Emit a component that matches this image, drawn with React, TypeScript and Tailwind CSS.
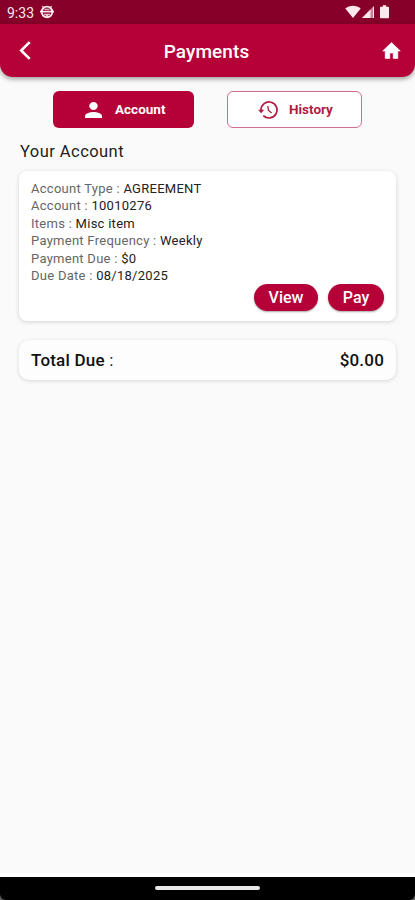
const details = [
  { label: 'Account Type', value: 'AGREEMENT' },
  { label: 'Account', value: '10010276' },
  { label: 'Items', value: 'Misc item' },
  { label: 'Payment Frequency', value: 'Weekly' },
  { label: 'Payment Due', value: '$0' },
  { label: 'Due Date', value: '08/18/2025' },
]

function StatusBar() {
  return (
    <div className="h-6 shrink-0 bg-[#870029] flex items-center justify-between pl-[7px] pr-[25px] text-[#fbe9ee]">
      <div className="flex items-center gap-[6px]">
        <span className="text-[14px] leading-6 pt-px">9:33</span>
        <svg className="w-[14px] h-[14px]" viewBox="0 0 14 14" fill="none" stroke="currentColor" strokeWidth="1.8">
          <circle cx="7" cy="7" r="5.3" />
          <path d="M0 6.6h14" strokeWidth="1.7" />
          <path d="M4 9.3h2.3v2.6M10 9.3H7.7v2.6M4.6 4.2h4.8" strokeWidth="1.1" />
          <path d="M3.4 2.4 2.4 1.2M10.6 2.4l1-1.2" strokeWidth="1.4" />
        </svg>
      </div>
      <svg className="w-[45px] h-[14px]" viewBox="0 0 45 14" fill="currentColor">
        <path d="M.3 3.6C4.7-.1 11.3-.1 15.7 3.6L8 13z" />
        <path d="M29 .8v12.2H17z" opacity=".55" />
        <path d="M25.5 4.4V13H17z" />
        <path d="M28 2h1v11h-1z" />
        <path d="M37.8.3h3.4v1.5h2c.5 0 .8.3.8.8v9.8c0 .5-.3.8-.8.8h-7.4c-.5 0-.8-.3-.8-.8V2.6c0-.5.3-.8.8-.8h2z" />
      </svg>
    </div>
  )
}

function Header() {
  return (
    <div className="h-[53px] shrink-0 bg-[#b50038] rounded-b-[13px] shadow-[0_2px_5px_rgba(0,0,0,0.38)] flex items-center justify-between pl-[19px] pr-[14px] text-white">
      <svg className="w-3 h-[19px]" viewBox="0 0 12 19" fill="none" stroke="currentColor" strokeWidth="2.6">
        <path d="M10.7 1.1 2.2 9.5l8.5 8.4" />
      </svg>
      <h1 className="text-[19px] font-medium leading-6 tracking-[0.1px] pt-[2px]">Payments</h1>
      <svg className="w-[19px] h-[17px]" viewBox="0 0 19 17" fill="currentColor" stroke="currentColor" strokeWidth="0.6" strokeLinejoin="round">
        <path d="M9.5.5 18.3 9h-2.5v7.5h-4.6V11H7.8v5.5H3.2V9H.7z" />
      </svg>
    </div>
  )
}

export default function App() {
  return (
    <div className="h-[900px] w-[415px] overflow-hidden bg-[#fafafa] font-['Roboto',sans-serif] flex flex-col">
      <StatusBar />
      <Header />

      <main className="flex-1 px-[19px] pt-[14px] border-b-4 border-white">
        <div className="flex pl-[34px] gap-[33px]">
          <button className="w-[141px] h-[37px] rounded-[6px] bg-[#b50038] text-white text-[13.5px] font-bold flex items-center pl-[32px] gap-[13px]">
            <svg className="w-[17px] h-4" viewBox="4 4 16 16" preserveAspectRatio="none" fill="currentColor">
              <path d="M12 12c2.21 0 4-1.79 4-4s-1.79-4-4-4-4 1.79-4 4 1.79 4 4 4zm0 2c-2.67 0-8 1.34-8 4v2h16v-2c0-2.66-5.33-4-8-4z" />
            </svg>
            Account
          </button>
          <button className="w-[135px] h-[37px] rounded-[6px] bg-white border border-[#cf6f8a] text-[#b01c40] text-[13.5px] font-bold flex items-center pl-[30px] gap-[11px]">
            <svg className="w-[20px] h-[18px]" viewBox="0 0 20 18" fill="none" stroke="currentColor" strokeWidth="1.7">
              <path d="M3 9.8V9a8 8 0 1 1 2.3 5.6" />
              <path d="M0 8.8h6.2L3.1 12.3z" fill="currentColor" stroke="none" />
              <path d="m9.8 5 .6 4.2 3.2 2.8" strokeWidth="1.3" />
            </svg>
            History
          </button>
        </div>

        <h2 className="mt-[14px] ml-[1px] text-[16.5px] leading-5 tracking-[0.45px] text-[#222]">Your Account</h2>

        <section className="mt-[9px] h-[150px] rounded-[8px] bg-white shadow-[0_1px_4px_rgba(0,0,0,0.16)] px-3 pt-[9px]">
          {details.map((item) => (
            <p key={item.label} className="text-[13px] leading-[17.4px] tracking-[0.27px] text-[#666]">
              {item.label} : <span className="text-[#222]">{item.value}</span>
            </p>
          ))}
          <div className="flex justify-end gap-[10px] text-white text-base font-medium">
            <button className="w-[64px] h-[27px] rounded-full bg-[#b50038] shadow-[0_1px_2px_rgba(0,0,0,0.35)]">View</button>
            <button className="w-[56px] h-[27px] rounded-full bg-[#b50038] shadow-[0_1px_2px_rgba(0,0,0,0.35)]">Pay</button>
          </div>
        </section>

        <section className="mt-[19px] h-10 rounded-[10px] bg-[#fdfdfd] shadow-[0_1px_4px_rgba(0,0,0,0.14)] px-3 pt-[2px] flex items-center justify-between text-[17px] font-medium tracking-[0.2px] text-[#111]">
          <p>Total Due <span className="font-normal">:</span></p>
          <p>$0.00</p>
        </section>
      </main>

      <div className="h-[23px] shrink-0 bg-[#5a5a5a]">
        <div className="h-full bg-black rounded-b-[6px] flex justify-center pt-[9px]">
          <div className="w-[105px] h-1 rounded-full bg-[#e8e8e8]" />
        </div>
      </div>
    </div>
  )
}
